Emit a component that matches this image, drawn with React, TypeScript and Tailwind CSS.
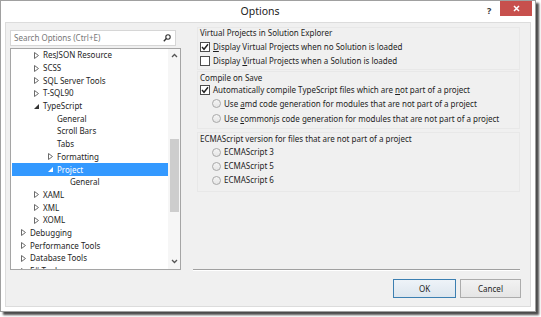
import React from "react";

const Collapsed = ({ white }: { white?: boolean }) => (
  <svg width="5" height="7" viewBox="0 0 5 7" className="shrink-0">
    <path d="M0.5 0.5 L4.5 3.5 L0.5 6.5 Z" fill="none" stroke={white ? "#fff" : "#6b6b6b"} strokeWidth="1" />
  </svg>
);
const Expanded = ({ white }: { white?: boolean }) => (
  <svg width="5" height="5" viewBox="0 0 5 5" className="shrink-0">
    <path d="M5 0 L5 5 L0 5 Z" fill={white ? "#fff" : "#333"} />
  </svg>
);

type Row = { label: string; level: number; kind: "c" | "e" | "n"; selected?: boolean };
const rows: Row[] = [
  { label: "ResJSON Resource", level: 2, kind: "c" },
  { label: "SCSS", level: 2, kind: "c" },
  { label: "SQL Server Tools", level: 2, kind: "c" },
  { label: "T-SQL90", level: 2, kind: "c" },
  { label: "TypeScript", level: 2, kind: "e" },
  { label: "General", level: 3, kind: "n" },
  { label: "Scroll Bars", level: 3, kind: "n" },
  { label: "Tabs", level: 3, kind: "n" },
  { label: "Formatting", level: 3, kind: "c" },
  { label: "Project", level: 3, kind: "e", selected: true },
  { label: "General", level: 4, kind: "n" },
  { label: "XAML", level: 2, kind: "c" },
  { label: "XML", level: 2, kind: "c" },
  { label: "XOML", level: 2, kind: "c" },
  { label: "Debugging", level: 1, kind: "c" },
  { label: "Performance Tools", level: 1, kind: "c" },
  { label: "Database Tools", level: 1, kind: "c" },
  { label: "F# Tools", level: 1, kind: "c" },
];

const indentClass: Record<number, string> = {
  1: "pl-[9px]",
  2: "pl-[22px]",
  3: "pl-[36px]",
  4: "pl-[49px]",
};

const CheckBox = ({ checked }: { checked?: boolean }) => (
  <div className="w-[10px] h-[10px] border border-[#4d4d4d] bg-white flex items-center justify-center shrink-0">
    {checked && (
      <svg width="8" height="8" viewBox="0 0 8 8">
        <path d="M1 4 L3 6.3 L7 1.2" fill="none" stroke="#222" strokeWidth="1.4" />
      </svg>
    )}
  </div>
);

const Radio = () => (
  <div className="w-[9px] h-[9px] rounded-full border border-[#a9a9a9] bg-gradient-to-b from-[#f4f4f4] to-[#e6e6e6] shrink-0" />
);

export default function App() {
  return (
    <div className="w-[541px] h-[317px] bg-white relative overflow-hidden text-[#1e1e1e]" style={{ fontFamily: '"Noto Sans", "Open Sans", sans-serif' }}>
      <div className="w-[536px] h-[312px] bg-white border border-[#a0a0a0] shadow-[3px_3px_2px_rgba(0,0,0,0.7)] flex flex-col">
        {/* title bar */}
        <div className="h-[21px] relative flex items-center justify-center shrink-0">
          <span className="text-[10.5px] text-[#222] pr-[16px] leading-none">Options</span>
          <span className="absolute left-[486px] top-[3px] text-[9px] font-bold text-[#333]">?</span>
          <div className="absolute left-[499px] top-0 w-[32px] h-[15px] bg-[#c7504d] flex items-center justify-center">
            <svg width="7" height="7" viewBox="0 0 7 7">
              <path d="M1 1 L6 6 M6 1 L1 6" stroke="#fff" strokeWidth="1.5" />
            </svg>
          </div>
        </div>
        {/* content */}
        <div className="mx-[4px] mb-[4px] flex-1 bg-[#f0f0f0] border border-[#dcdcdc] flex text-[8px]">
          {/* left */}
          <div className="pl-[4px] pt-[7px] w-[187px] shrink-0 flex flex-col">
            <div className="w-[166px] h-[16px] bg-white border border-[#d6d6d6] flex items-center justify-between pl-[3px] pr-[4px]">
              <span className="text-[#777]">Search Options (Ctrl+E)</span>
              <svg width="8" height="8" viewBox="0 0 8 8">
                <circle cx="5" cy="3" r="2.2" fill="none" stroke="#333" strokeWidth="1.1" />
                <path d="M3.4 4.6 L0.8 7.2" stroke="#333" strokeWidth="1.4" />
              </svg>
            </div>
            <div className="mt-[2px] w-[171px] h-[222px] bg-white border border-[#a5a5a5] flex overflow-hidden">
              <div className="flex-1 overflow-hidden pl-[1px]">
                {rows.map((r, i) => (
                  <div
                    key={i}
                    className={`h-[12.7px] flex items-center gap-[4px] ${indentClass[r.level]} ${r.selected ? "bg-[#3399ff] text-white" : ""}`}
                  >
                    <div className="w-[5px] flex justify-center">
                      {r.kind === "c" && <Collapsed white={r.selected} />}
                      {r.kind === "e" && <Expanded white={r.selected} />}
                    </div>
                    <span className="whitespace-nowrap leading-none">{r.label}</span>
                  </div>
                ))}
              </div>
              <div className="w-[12px] shrink-0 bg-[#f6f6f6] flex flex-col items-center">
                <svg width="7" height="5" viewBox="0 0 7 5" className="mt-[4px]">
                  <path d="M1 4 L3.5 1.5 L6 4" fill="none" stroke="#555" strokeWidth="1.3" />
                </svg>
                <div className="mt-[81px] w-[9px] h-[73px] bg-[#cdcdcd]" />
                <div className="flex-1" />
                <svg width="7" height="5" viewBox="0 0 7 5" className="mb-[5px]">
                  <path d="M1 1 L3.5 3.5 L6 1" fill="none" stroke="#555" strokeWidth="1.3" />
                </svg>
              </div>
            </div>
          </div>
          {/* right */}
          <div className="flex-1 flex flex-col pr-[9px]">
            <div className="mt-[4px] ml-[4px] mr-[1px] border border-[#e8e8e8] pl-[2px]">
              <div className="h-[10px] flex items-center">Virtual Projects in Solution Explorer</div>
              <div className="mt-[2px] h-[14px] flex items-center gap-[3px]">
                <CheckBox checked />
                <span>
                  <u>D</u>isplay Virtual Projects when no Solution is loaded
                </span>
              </div>
              <div className="h-[14px] mb-[1px] flex items-center gap-[3px]">
                <CheckBox />
                <span>
                  Display <u>V</u>irtual Projects when a Solution is loaded
                </span>
              </div>
            </div>
            <div className="mt-[1px] ml-[4px] mr-[1px] border border-[#e8e8e8] pl-[2px] pb-[2px]">
              <div className="h-[11px] flex items-center">Compile on Save</div>
              <div className="h-[13px] flex items-center gap-[3px]">
                <CheckBox checked />
                <span>
                  Automatically compile TypeScript files which are <u>n</u>ot part of a project
                </span>
              </div>
              <div className="h-[15px] flex items-center gap-[3px] pl-[12px]">
                <Radio />
                <span>
                  Use <u>a</u>md code generation for modules that are not part of a project
                </span>
              </div>
              <div className="h-[15px] flex items-center gap-[3px] pl-[12px]">
                <Radio />
                <span>
                  Use <u>c</u>ommonjs code generation for modules that are not part of a project
                </span>
              </div>
            </div>
            <div className="mt-[3px] ml-[4px] mr-[1px] border border-[#e8e8e8] pl-[2px] pb-[4px]">
              <div className="h-[12px] flex items-center">ECMAScript version for files that are not part of a project</div>
              {["ECMAScript 3", "ECMAScript 5", "ECMAScript 6"].map((t) => (
                <div key={t} className="h-[14px] flex items-center gap-[3px] pl-[12px]">
                  <Radio />
                  <span>{t}</span>
                </div>
              ))}
            </div>
            <div className="flex-1" />
            <div className="h-[2px] border-t border-[#a0a0a0] border-b border-b-white mr-[1px]" />
            <div className="mt-[8px] mb-[8px] flex justify-end gap-[4px] pr-[0px]">
              <button className="w-[63px] h-[19px] border border-[#3c7fb1] bg-gradient-to-b from-[#eef3f8] to-[#dde6ee] text-[8px]">
                OK
              </button>
              <button className="w-[61px] h-[19px] border border-[#acacac] bg-gradient-to-b from-[#f2f2f2] to-[#e5e5e5] text-[8px]">
                Cancel
              </button>
            </div>
          </div>
        </div>
      </div>
    </div>
  );
}
